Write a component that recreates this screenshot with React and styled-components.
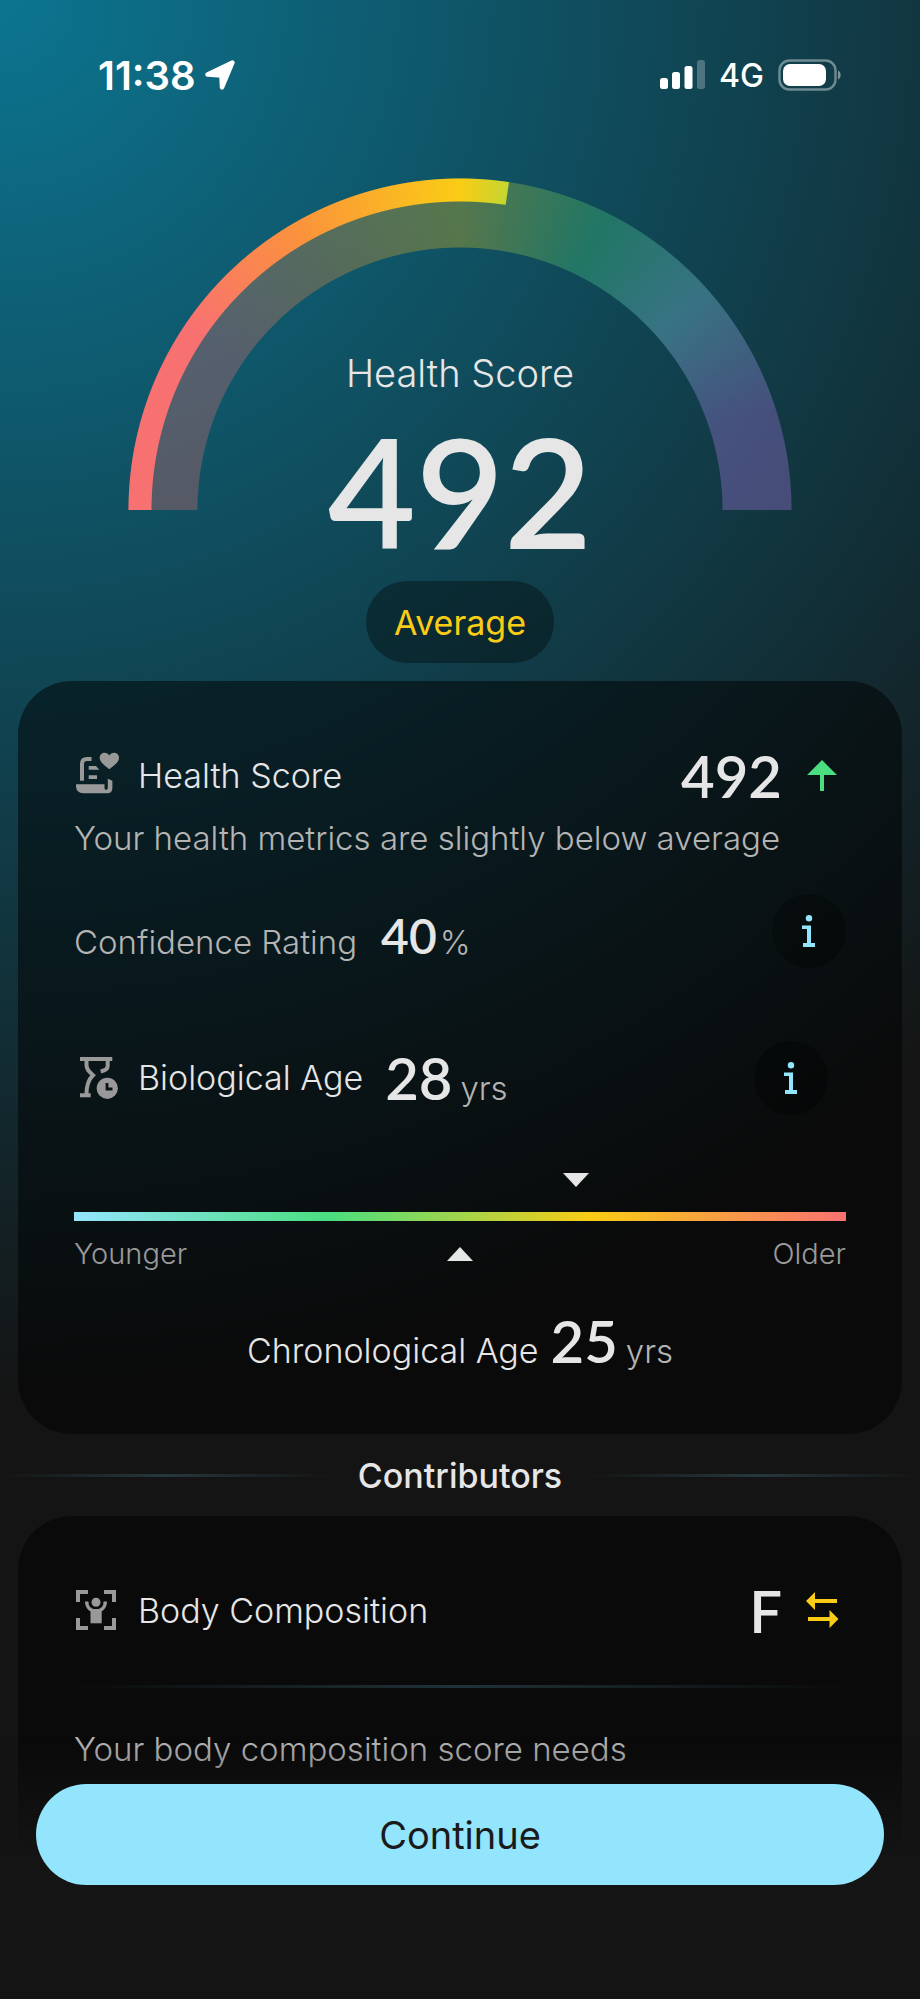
import React from 'react'
import styled, { createGlobalStyle } from 'styled-components'

const colors = {
  page: '#141414',
  text: '#e6e6e6',
  muted: '#b4b4b4',
  faint: '#9a9a9a',
  icon: '#999999',
  red: '#f87171',
  orange: '#fb923c',
  yellow: '#facc15',
  green: '#4ade80',
  cyan: '#93e5fd',
  purple: '#c084fc',
}

const GlobalStyle = createGlobalStyle`
  * {
    box-sizing: border-box;
  }
  body {
    margin: 0;
    background: ${colors.page};
    color: ${colors.text};
    font-family: Inter, 'Liberation Sans', sans-serif;
    font-weight: 300;
  }
  h1, h2, p {
    margin: 0;
    font-weight: inherit;
  }
  svg {
    display: block;
    flex: none;
  }
`

const Page = styled.div`
  min-height: 100vh;
  overflow: hidden;
  background: radial-gradient(ellipse 155vw 1400px at 0 0, #0c7591, ${colors.page});
`

const StatusBar = styled.header`
  display: flex;
  justify-content: space-between;
  align-items: center;
  height: 150px;
  padding: 0 78px 0 98px;
  color: #fff;
`

const StatusGroup = styled.div`
  display: flex;
  align-items: center;
  gap: ${props => props.$gap}px;
`

const Clock = styled.time`
  font-size: 40px;
  font-weight: 600;
`

const Network = styled.span`
  font-size: 32px;
  font-weight: 500;
`

const Hero = styled.section`
  display: grid;
  justify-content: center;
  padding: 28px 0 18px;
`

// both arcs share one sweep, starting at the left end of the half circle
const sweep = `
  ${colors.red} 34deg,
  ${colors.orange} 60deg,
  ${colors.yellow} 90deg`

const Gauge = styled.div`
  grid-area: 1 / 1;
  display: grid;
  width: 664px;
  height: 332px;
`

const Track = styled.div`
  grid-area: 1 / 1;
  opacity: 0.3;
  background: conic-gradient(
    from 270deg at 50% 100%,
    ${sweep},
    ${colors.green} 116deg,
    ${colors.cyan} 138deg,
    ${colors.purple} 162deg
  );
  mask: radial-gradient(circle at 50% 100%, transparent 262px, #000 263px 331px, transparent 332px);
`

const Progress = styled.div`
  grid-area: 1 / 1;
  background: conic-gradient(
    from 270deg at 50% 100%,
    ${sweep},
    #c5d630 98.4deg,
    transparent 98.6deg
  );
  mask: radial-gradient(circle at 50% 100%, transparent 308px, #000 309px 331px, transparent 332px);
`

const Readout = styled.div`
  grid-area: 1 / 1;
  display: flex;
  flex-direction: column;
  align-items: center;
  padding-top: 171px;
`

const ReadoutLabel = styled.h1`
  font-size: 38px;
  line-height: 48px;
`

const ReadoutValue = styled.div`
  margin: 17px 0 15px;
  font-family: Lato, sans-serif;
  font-size: 152px;
  font-weight: 600;
  line-height: 152px;
`

const Pill = styled.span`
  display: flex;
  align-items: center;
  height: 82px;
  padding: 0 28px;
  border-radius: 41px;
  background: rgba(0, 0, 0, 0.35);
  color: ${colors.yellow};
  font-size: 34px;
  font-weight: 400;
`

const Card = styled.section`
  margin: 0 18px;
  padding: 63px 56px ${props => props.$bottom || 61}px;
  border-radius: 54px;
  background: rgba(0, 0, 0, 0.5);
`

const Row = styled.div`
  display: flex;
  align-items: ${props => props.$align || 'center'};
  justify-content: space-between;
  margin-top: ${props => props.$top || 0}px;
  padding-right: ${props => props.$right || 0}px;
`

const Heading = styled.div`
  display: flex;
  align-items: center;
  gap: 16px;
`

const Title = styled.h2`
  font-size: 34px;
  line-height: 64px;
`

const Reading = styled.div`
  display: flex;
  align-items: center;
  gap: 16px;
`

const Value = styled.span`
  font-family: Lato, sans-serif;
  font-size: ${props => (props.$small ? 48 : 58)}px;
  font-weight: 600;
  line-height: 64px;
`

const Unit = styled.span`
  margin-left: ${props => props.$gap || 0}px;
  color: ${colors.muted};
  font-size: 33px;
`

const Measure = styled.div`
  display: flex;
  align-items: baseline;
  justify-content: ${props => (props.$center ? 'center' : 'flex-start')};
  padding-left: ${props => props.$left || 0}px;
`

const Label = styled.span`
  margin-right: ${props => props.$gap}px;
  color: ${props => (props.$bright ? colors.text : colors.muted)};
  font-size: ${props => (props.$bright ? 34 : 33)}px;
`

const Description = styled.p`
  margin-top: ${props => props.$top}px;
  color: ${colors.muted};
  font-size: 33px;
  line-height: 44px;
`

const InfoButton = styled.button`
  display: flex;
  align-items: center;
  justify-content: center;
  width: 74px;
  height: 74px;
  padding: 0;
  border: 0;
  border-radius: 50%;
  background: rgba(0, 0, 0, 0.3);
  color: ${colors.cyan};
`

const Scale = styled.div`
  margin: 58px 0 35px;
`

const MarkerTrack = styled.div`
  display: flex;
  width: 130%;
  justify-content: center;
  margin-bottom: 25px;
`

const ScaleBar = styled.div`
  height: 9px;
  background: linear-gradient(
    90deg,
    ${colors.cyan},
    ${colors.green} 33%,
    ${colors.yellow} 67%,
    ${colors.red}
  );
`

const ScaleLabels = styled.div`
  display: grid;
  grid-template-columns: 1fr auto 1fr;
  align-items: center;
  margin-top: 13px;
  color: ${colors.faint};
  font-size: 29px;
  line-height: 40px;
  > :last-child {
    text-align: right;
  }
`

const SectionHeading = styled.div`
  display: grid;
  grid-template-columns: 1fr auto 1fr;
  align-items: center;
  gap: 28px;
  height: 82px;
  h2 {
    font-size: 34px;
    font-weight: 500;
  }
`

const Divider = styled.div`
  height: 3px;
  margin-top: ${props => props.$top || 0}px;
  background: linear-gradient(90deg, transparent, rgba(60, 100, 112, 0.45), transparent);
`

const Footer = styled.footer`
  position: fixed;
  right: 0;
  bottom: 0;
  left: 0;
  padding: 44px 36px 114px;
  background: linear-gradient(rgba(20, 20, 20, 0), ${colors.page} 45%);
`

const ContinueButton = styled.button`
  display: block;
  width: 100%;
  height: 101px;
  border: 0;
  border-radius: 51px;
  background: ${colors.cyan};
  color: #1a1a1a;
  font-family: inherit;
  font-size: 38px;
  font-weight: 400;
`

const LocationIcon = () => (
  <svg width="32" height="32" viewBox="0 0 32 32" fill="currentColor" stroke="currentColor">
    <path d="M28.500 3.500 3.500 15.500l14 1 .5 12z" strokeWidth="4.500" strokeLinejoin="round" />
  </svg>
)

const SignalIcon = () => (
  <svg width="45" height="30" viewBox="0 0 45 30" fill="currentColor">
    <rect x="0" y="18" width="8" height="11" rx="2.500" />
    <rect x="12" y="12" width="8" height="17" rx="2.500" />
    <rect x="24.500" y="6" width="8" height="23" rx="2.500" />
    <rect x="37" y="0" width="8" height="29" rx="2.500" opacity="0.25" />
  </svg>
)

const BatteryIcon = () => (
  <svg width="64" height="32" viewBox="0 0 64 32">
    <rect x="1.500" y="1.500" width="56" height="29" rx="10" fill="none" stroke="#fff" strokeWidth="2.400" opacity="0.4" />
    <rect x="5" y="5" width="43" height="22" rx="7" fill="#fff" />
    <path d="M60 11.500c3.500 1.500 3.500 7.500 0 9z" fill="#fff" opacity="0.45" />
  </svg>
)

const ReportIcon = () => (
  <svg width="48" height="48" viewBox="0 0 48 48" fill={colors.icon}>
    <path d="M8 28.700V12q0-5 5-5h4.500" fill="none" stroke={colors.icon} strokeWidth="4" />
    <path d="M14.700 14h7.300l3.300 3.700H14.700zM14.700 23.300H23V27h-8.300z" />
    <path d="M2 32.300h28.500V36c0 2.400 3.300 2.400 3.300 0v-9.300l4.600 2V36q0 5.300-5.300 5.300H9.500Q2 41.300 2 34z" />
    <path d="M35.300 17.300C30 13 25.700 10 25.700 5.800c0-5.400 7-6.800 9.600-2.400 2.700-4.400 9.700-3 9.700 2.400 0 4.200-4.300 7.200-9.700 11.500z" />
  </svg>
)

const HourglassIcon = () => (
  <svg width="48" height="48" viewBox="0 0 48 48" fill={colors.icon}>
    <path d="M6 3h32.300v4H6zM6 39.300h10.700v4H6z" />
    <path
      d="M12.500 6v5c0 5 3 7 6.500 10.200C15 25 12.500 30 12.500 40M33.700 6v6c0 2.500-2.500 4.500-7 5.500"
      fill="none"
      stroke={colors.icon}
      strokeWidth="4"
    />
    <circle cx="33.300" cy="34.300" r="10.600" />
    <path d="M33 29v6h5.500" fill="none" stroke="#0a1214" strokeWidth="2.800" />
  </svg>
)

const BodyScanIcon = () => (
  <svg width="48" height="48" viewBox="0 0 48 48" fill="none" stroke={colors.icon} strokeWidth="4">
    <path d="M4 15V5h10M30 5h10v10M4 31v10h10M40 31v10H30" />
    <path d="M12.700 14.500c0 6 4 9.500 9.300 9.500s9.300-3.500 9.300-9.500" strokeWidth="3.400" />
    <circle cx="22" cy="15.300" r="4.500" fill={colors.icon} stroke="none" />
    <path d="M16.500 22h11.200v14.300H16.500z" fill={colors.icon} stroke="none" />
  </svg>
)

const ArrowUpIcon = () => (
  <svg width="48" height="48" viewBox="0 0 48 48" fill={colors.green}>
    <path d="M24 8 39 23H26v16h-4V23H9z" />
  </svg>
)

const SwapIcon = () => (
  <svg width="48" height="48" viewBox="0 0 48 48" fill={colors.yellow}>
    <path d="M8 14l9-9v7h22v4H17v7zM40.500 32l-9-9v7H10v4h21.500v7z" />
  </svg>
)

const InfoIcon = () => (
  <svg width="14" height="32" viewBox="0 0 14 32" fill="currentColor">
    <circle cx="7" cy="3.200" r="3.200" />
    <path d="M0 10.500h9V28h4v4H1v-4h4V14H0z" />
  </svg>
)

const Marker = ({ down }) => (
  <svg width="26" height="14" viewBox="0 0 26 14" fill={colors.text}>
    <path d={down ? 'M0 0h26L13 14z' : 'M13 0l13 14H0z'} />
  </svg>
)

const Info = ({ about }) => (
  <InfoButton type="button" aria-label={about}>
    <InfoIcon />
  </InfoButton>
)

const App = () => (
  <Page>
    <GlobalStyle />
    <StatusBar>
      <StatusGroup $gap={8}>
        <Clock>11:38</Clock>
        <LocationIcon />
      </StatusGroup>
      <StatusGroup $gap={14}>
        <SignalIcon />
        <Network>4G</Network>
        <BatteryIcon />
      </StatusGroup>
    </StatusBar>

    <Hero>
      <Gauge>
        <Track />
        <Progress />
      </Gauge>
      <Readout>
        <ReadoutLabel>Health Score</ReadoutLabel>
        <ReadoutValue>492</ReadoutValue>
        <Pill>Average</Pill>
      </Readout>
    </Hero>

    <Card>
      <Row>
        <Heading>
          <ReportIcon />
          <Title>Health Score</Title>
        </Heading>
        <Reading>
          <Value>492</Value>
          <ArrowUpIcon />
        </Reading>
      </Row>
      <Description $top={8}>Your health metrics are slightly below average</Description>
      <Row $top={34} $align="flex-end">
        <Measure>
          <Label $gap={24}>Confidence Rating</Label>
          <Value $small>40</Value>
          <Unit $gap={3}>%</Unit>
        </Measure>
        <Info about="About confidence rating" />
      </Row>
      <Row $top={73} $right={18}>
        <Heading>
          <HourglassIcon />
          <Title>Biological Age</Title>
          <Measure $left={6}>
            <Value>28</Value>
            <Unit $gap={8}>yrs</Unit>
          </Measure>
        </Heading>
        <Info about="About biological age" />
      </Row>
      <Scale>
        <MarkerTrack>
          <Marker down />
        </MarkerTrack>
        <ScaleBar />
        <ScaleLabels>
          <span>Younger</span>
          <Marker />
          <span>Older</span>
        </ScaleLabels>
      </Scale>
      <Measure $center>
        <Label $bright $gap={12}>Chronological Age</Label>
        <Value>25</Value>
        <Unit $gap={8}>yrs</Unit>
      </Measure>
    </Card>

    <SectionHeading>
      <Divider />
      <h2>Contributors</h2>
      <Divider />
    </SectionHeading>

    <Card $bottom={180}>
      <Row>
        <Heading>
          <BodyScanIcon />
          <Title>Body Composition</Title>
        </Heading>
        <Reading>
          <Value>F</Value>
          <SwapIcon />
        </Reading>
      </Row>
      <Divider $top={42} />
      <Description $top={39}>Your body composition score needs</Description>
    </Card>

    <Footer>
      <ContinueButton type="button">Continue</ContinueButton>
    </Footer>
  </Page>
)

export default App
